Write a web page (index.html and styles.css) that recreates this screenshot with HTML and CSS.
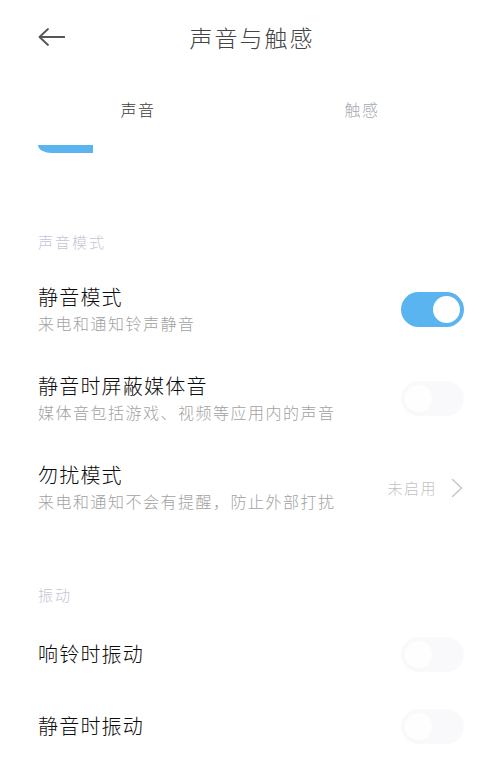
FILE: index.html
```html
<!DOCTYPE html>
<html lang="zh">
<head>
<meta charset="utf-8">
<link rel="stylesheet" href="styles.css">
</head>
<body>
<div class="page">
  <header class="topbar">
    <svg class="back" width="28" height="20" viewBox="0 0 28 20"><path d="M11 2 L2.5 10 L11 18 M2.5 10 H27.5" fill="none" stroke="#555" stroke-width="1.8" stroke-linecap="round" stroke-linejoin="round"/></svg>
    <h1 class="title">声音与触感</h1>
  </header>
  <nav class="tabs">
    <div class="tab active">声音</div>
    <div class="tab">触感</div>
  </nav>
  <div class="indicator"></div>

  <section class="group first">
    <div class="group-title">声音模式</div>
    <div class="row">
      <div class="text">
        <div class="label">静音模式</div>
        <div class="sub">来电和通知铃声静音</div>
      </div>
      <div class="switch on"><span class="knob"></span></div>
    </div>
    <div class="row">
      <div class="text">
        <div class="label">静音时屏蔽媒体音</div>
        <div class="sub">媒体音包括游戏、视频等应用内的声音</div>
      </div>
      <div class="switch"><span class="knob"></span></div>
    </div>
    <div class="row">
      <div class="text">
        <div class="label">勿扰模式</div>
        <div class="sub">来电和通知不会有提醒，防止外部打扰</div>
      </div>
      <div class="value">
        <span>未启用</span>
        <svg width="12" height="20" viewBox="0 0 12 20"><path d="M1.5 1.5 L10.5 10 L1.5 18.5" fill="none" stroke="#c6c6c6" stroke-width="1.5" stroke-linecap="round" stroke-linejoin="round"/></svg>
      </div>
    </div>
  </section>

  <section class="group">
    <div class="group-title">振动</div>
    <div class="row single">
      <div class="label">响铃时振动</div>
      <div class="switch"><span class="knob"></span></div>
    </div>
    <div class="row single">
      <div class="label">静音时振动</div>
      <div class="switch"><span class="knob"></span></div>
    </div>
  </section>
</div>
</body>
</html>
```
FILE: styles.css
```css
* { box-sizing: border-box; }
html, body { margin: 0; padding: 0; background: #fff; }
body {
  font-family: "Noto Sans CJK SC", "Noto Sans", sans-serif;
  font-weight: 300;
  width: 500px;
  overflow: hidden;
}
.page { width: 500px; }

.topbar {
  height: 74px;
  position: relative;
  display: flex;
  align-items: center;
  justify-content: center;
}
.back { position: absolute; left: 37px; top: 27px; }
.title {
  margin: 0 0 0 4px;
  font-size: 23px;
  font-weight: 300;
  letter-spacing: 2px;
  color: #444;
  line-height: 30px;
}

.tabs {
  height: 70px;
  display: flex;
  padding: 0 26px;
}
.tab {
  flex: 1;
  display: flex;
  align-items: center;
  justify-content: center;
  font-size: 16px;
  letter-spacing: 1.5px;
  color: #a6a9b3;
}
.tab.active { color: #3c3c3c; }

.indicator {
  margin-left: 38px;
  width: 55px;
  height: 8px;
  margin-top: 1px;
  background: #5ab4f0;
  border-bottom-left-radius: 14px 8px;
}

.group { margin-top: 53px; }
.group.first { margin-top: 79px; }
.group-title {
  padding-left: 38px;
  font-size: 15px;
  line-height: 20px;
  letter-spacing: 2px;
  color: #c3c6d6;
  margin-bottom: 13px;
}

.row {
  display: flex;
  align-items: center;
  justify-content: space-between;
  padding: 19px 36px 19px 38px;
  min-height: 89px;
}
.row.single { min-height: 72px; padding-top: 0; padding-bottom: 0; }
.label {
  font-size: 20px;
  line-height: 26px;
  letter-spacing: 1.2px;
  color: #0c0c0c;
}
.sub {
  margin-top: 1px;
  font-size: 16px;
  line-height: 24px;
  letter-spacing: 1.5px;
  color: #a2a2a2;
}

.switch {
  width: 63px;
  height: 35px;
  border-radius: 18px;
  background: #f9f9fb;
  position: relative;
  flex: none;
}
.switch .knob {
  position: absolute;
  top: 4px;
  left: 4px;
  width: 27px;
  height: 27px;
  border-radius: 50%;
  background: #fefefe;
}
.switch.on { background: #5ab4f0; }
.switch.on .knob { left: auto; right: 4px; background: #fff; }

.value {
  display: flex;
  align-items: center;
  gap: 14px;
  font-size: 15px;
  letter-spacing: 1.5px;
  color: #c2c2c2;
  margin-right: 1px;
}
.value svg { display: block; }
```
